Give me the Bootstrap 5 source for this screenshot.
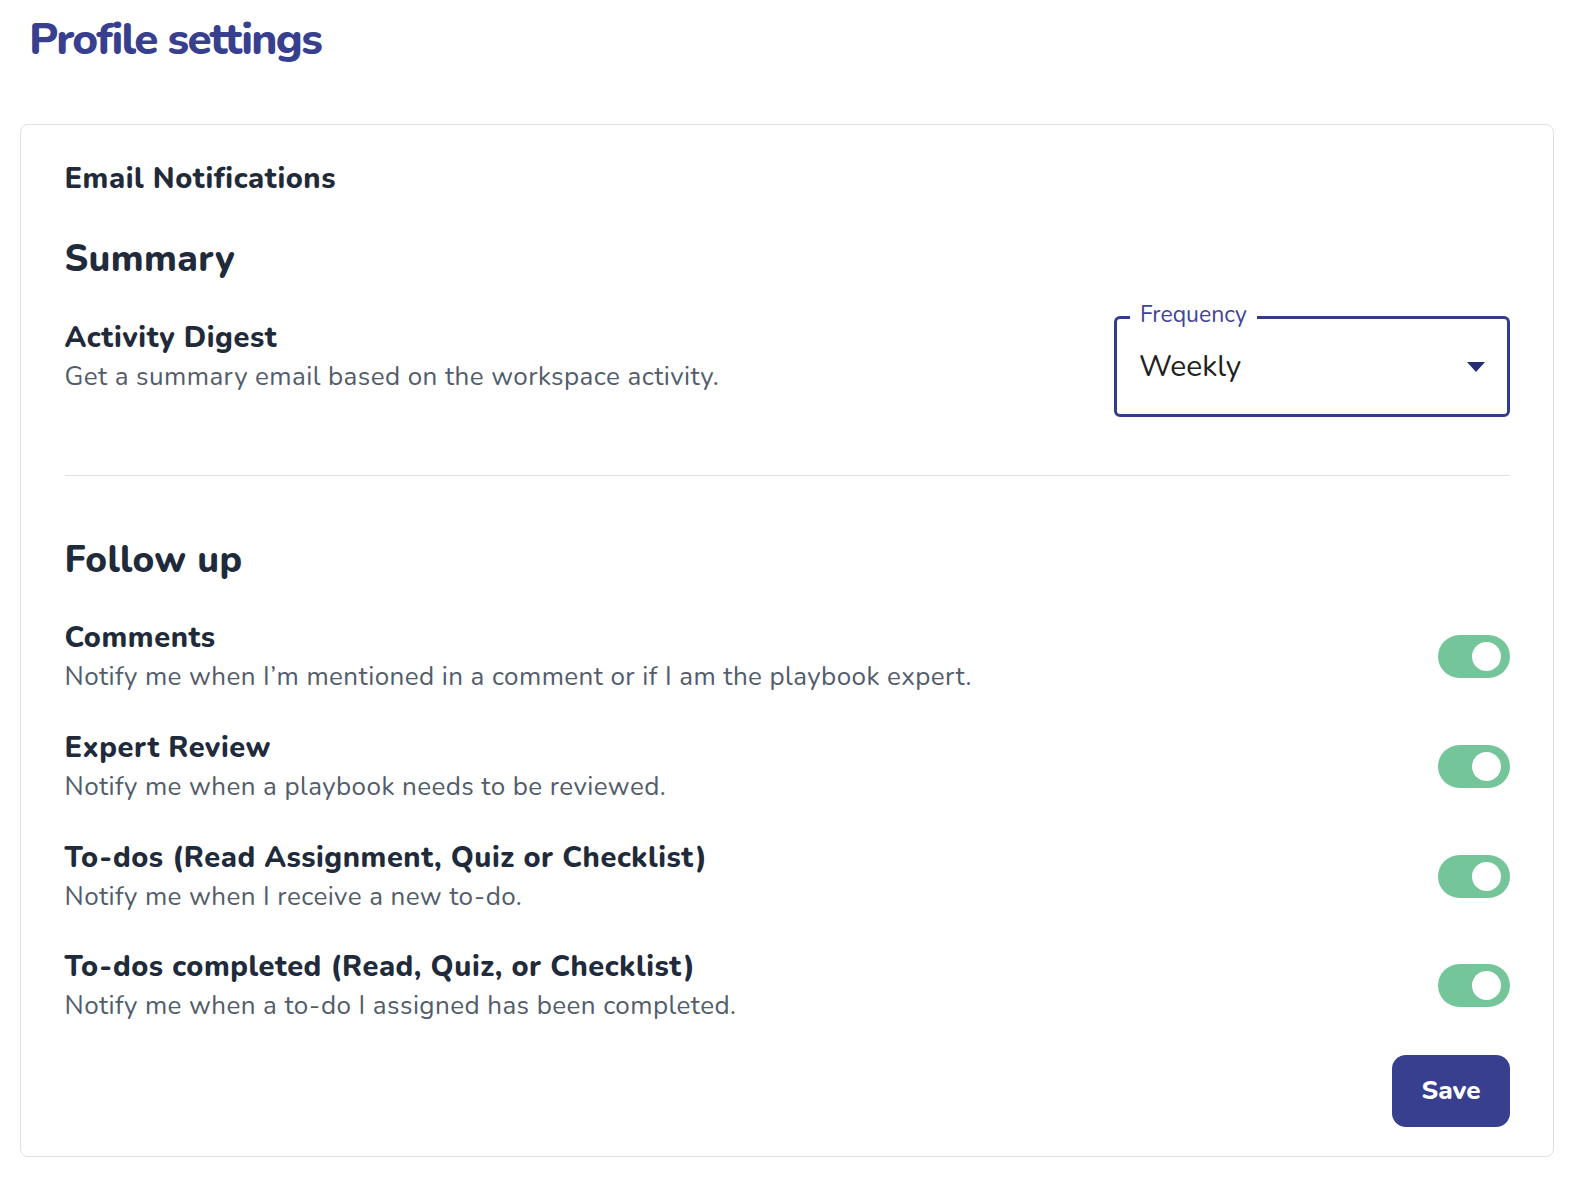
<!doctype html>
<html lang="en"><head><meta charset="utf-8"><title>Profile settings</title>
<link href="https://cdn.jsdelivr.net/npm/bootstrap@5.3.0/dist/css/bootstrap.min.css" rel="stylesheet">
<style>
html,body{background:#fff;font-family:"Nunito","Nunito Sans","Noto Sans",sans-serif;color:#1f2937}
.pg{padding:0 32px 0 20px}
.ttl{font-family:"Nunito","Nunito Sans","Noto Sans",sans-serif;font-size:44px;font-weight:800;color:#383f8f;letter-spacing:-1.65px;line-height:56px;margin:12px 0 56px 9px}
.panel{border:1px solid #e0e0e0;border-radius:8px;padding:36px 43px 28px 43.5px;height:1033px}
.h-a{font-size:29px;font-weight:800;line-height:36px;margin:0;letter-spacing:.55px;color:#1f2a3a}
.h-b{font-size:37px;font-weight:800;line-height:44px;margin:40px 0 0;letter-spacing:.35px;color:#1f2a3a}
.nm{font-size:29px;font-weight:800;line-height:39px;letter-spacing:.55px;color:#1f2a3a}
.ds{font-size:26px;line-height:40px;color:#525c6b;letter-spacing:.43px}
.top-row{margin-top:35px}
.txt-top{padding-top:2px}
.rw-txt{padding-top:2px}
.frq{width:396px;height:101px;border:3px solid #353b8c;border-radius:6px;position:relative;padding:0 22px;font-size:30px;color:#212121;flex:none}
.frq-l{position:absolute;top:-19px;left:13px;background:#fff;padding:0 10px 0 10px;font-size:23px;line-height:30px;color:#3f4596}
.car{width:0;height:0;border:9px solid transparent;border-top:10px solid #272d75;border-bottom:0}
.rule{border-top:1px solid #e0e0e8;margin:58px 0 62px}
.fu{margin:0 0 20px}
.tg{width:72px;height:43px;border-radius:22px;background:#74c59a;padding:7px 9px 7px 34px;flex:none}
.tg i{display:block;width:29px;height:29px;border-radius:50%;background:#fff}
.rw{height:109.7px}
.save-row{margin-top:14px}
.sv{background:#383f8f;border:0;border-radius:14px;color:#fff;width:118px;height:72px;font-size:26px;font-weight:800}
</style></head><body>
<div class="pg">
<h1 class="ttl">Profile settings</h1>
<div class="panel">
<h2 class="h-a">Email Notifications</h2>
<h3 class="h-b">Summary</h3>
<div class="d-flex justify-content-between align-items-start top-row">
<div class="txt-top"><div class="nm">Activity Digest</div><div class="ds">Get a summary email based on the workspace activity.</div></div>
<div class="frq d-flex align-items-center justify-content-between"><span class="frq-l">Frequency</span><span>Weekly</span><span class="car"></span></div>
</div>
<div class="rule"></div>
<h3 class="h-b fu">Follow up</h3>
<div class="d-flex justify-content-between align-items-center rw"><div class="rw-txt"><div class="nm">Comments</div><div class="ds">Notify me when I’m mentioned in a comment or if I am the playbook expert.</div></div><span class="tg"><i></i></span></div>
<div class="d-flex justify-content-between align-items-center rw"><div class="rw-txt"><div class="nm">Expert Review</div><div class="ds">Notify me when a playbook needs to be reviewed.</div></div><span class="tg"><i></i></span></div>
<div class="d-flex justify-content-between align-items-center rw"><div class="rw-txt"><div class="nm">To-dos (Read Assignment, Quiz or Checklist)</div><div class="ds">Notify me when I receive a new to-do.</div></div><span class="tg"><i></i></span></div>
<div class="d-flex justify-content-between align-items-center rw"><div class="rw-txt"><div class="nm">To-dos completed (Read, Quiz, or Checklist)</div><div class="ds">Notify me when a to-do I assigned has been completed.</div></div><span class="tg"><i></i></span></div>
<div class="d-flex justify-content-end save-row"><button class="btn sv">Save</button></div>
</div></div>
<script src="https://cdn.jsdelivr.net/npm/bootstrap@5.3.0/dist/js/bootstrap.bundle.min.js"></script>
</body></html>
